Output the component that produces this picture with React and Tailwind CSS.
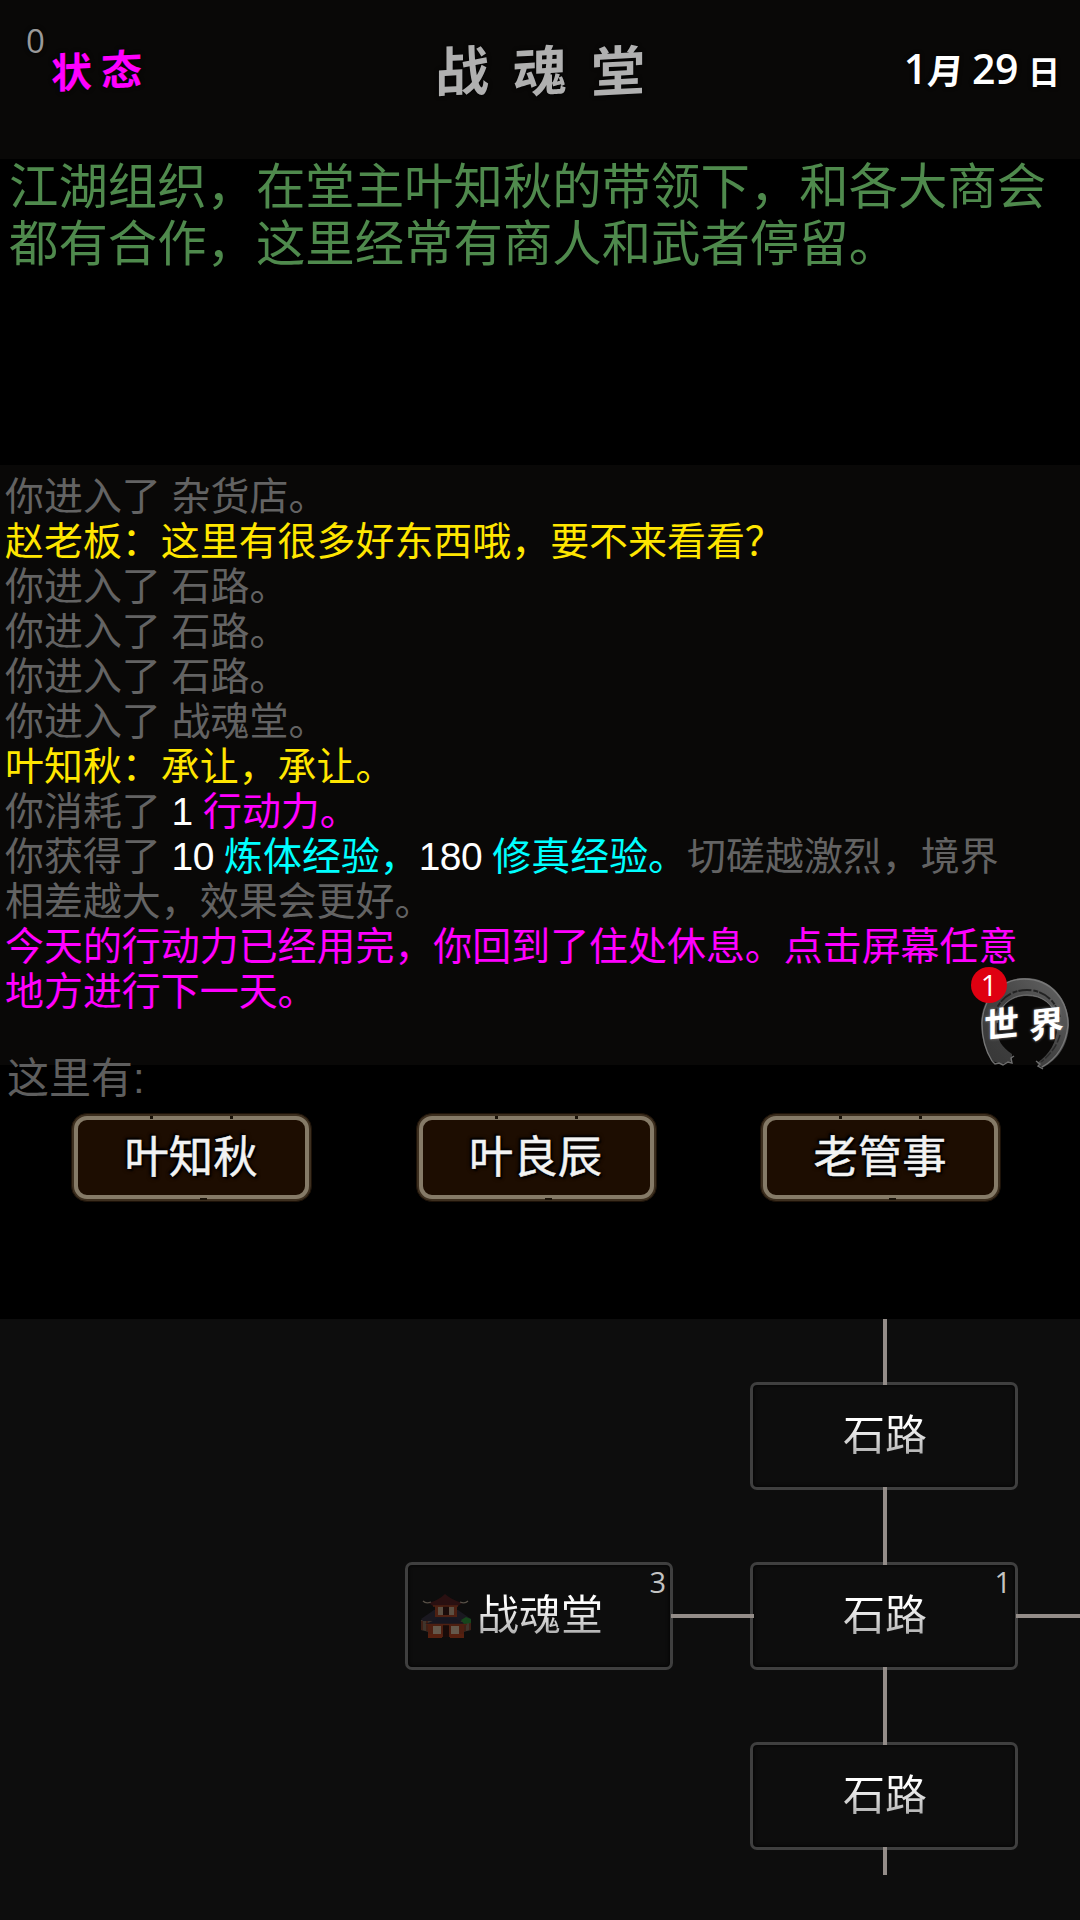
const logLines = [
  [{ text: '你进入了 杂货店。', tone: 'muted' }],
  [{ text: '赵老板：这里有很多好东西哦，要不来看看？', tone: 'talk' }],
  [{ text: '你进入了 石路。', tone: 'muted' }],
  [{ text: '你进入了 石路。', tone: 'muted' }],
  [{ text: '你进入了 石路。', tone: 'muted' }],
  [{ text: '你进入了 战魂堂。', tone: 'muted' }],
  [{ text: '叶知秋：承让，承让。', tone: 'talk' }],
  [
    { text: '你消耗了 ', tone: 'muted' },
    { text: '1 ', tone: 'number' },
    { text: '行动力。', tone: 'action' },
  ],
  [
    { text: '你获得了 ', tone: 'muted' },
    { text: '10 ', tone: 'number' },
    { text: '炼体经验，', tone: 'exp' },
    { text: '180 ', tone: 'number' },
    { text: '修真经验。', tone: 'exp' },
    { text: '切磋越激烈，境界', tone: 'muted' },
  ],
  [{ text: '相差越大，效果会更好。', tone: 'muted' }],
  [{ text: '今天的行动力已经用完，你回到了住处休息。点击屏幕任意', tone: 'action' }],
  [{ text: '地方进行下一天。', tone: 'action' }],
];

const tones = {
  muted: 'text-[#636363]',
  talk: 'text-[#ffe600]',
  number: 'text-white tracking-[-0.55px]',
  action: 'text-[#ff00ff]',
  exp: 'text-[#00ffff]',
};

const people = ['叶知秋', '叶良辰', '老管事'];

const rooms = [
  { id: 'north', name: '石路', place: 'left-[750px] top-[63px]' },
  { id: 'hall', name: '战魂堂', count: 3, icon: true, place: 'left-[405px] top-[243px]' },
  { id: 'center', name: '石路', count: 1, place: 'left-[750px] top-[243px]' },
  { id: 'south', name: '石路', place: 'left-[750px] top-[423px]' },
];

const paths = [
  'left-[883px] top-0 w-1 h-[66px]',
  'left-[883px] top-[168px] w-1 h-[78px]',
  'left-[883px] top-[348px] w-1 h-[78px]',
  'left-[883px] top-[528px] w-1 h-[28px]',
  'left-[671px] top-[295px] w-[83px] h-1',
  'left-[1016px] top-[295px] w-[64px] h-1',
];

function Header() {
  return (
    <header className="h-[159px] shrink-0 flex items-start justify-between bg-[#090807] font-bold whitespace-nowrap [text-shadow:0_0_4px_#000]">
      <div className="w-[330px] flex items-start pl-[26px]">
        <span className="mt-[17px] w-[25px] text-[33px] leading-[48px] font-medium text-[#999] font-['Open_Sans','Noto_Sans',sans-serif]">0</span>
        <span className="mt-[46px] text-[41px] leading-[52px] tracking-[9px] text-[#ff00ff] -skew-y-3">状态</span>
      </div>
      <h1 className="mt-[37px] text-[54px] leading-[70px] text-[#b0b0b0] flex gap-[24px]">
        <span className="-skew-y-3">战</span>
        <span className="-skew-y-3">魂</span>
        <span className="-skew-y-3">堂</span>
      </h1>
      <div className="mt-[41px] pr-[20px] w-[330px] flex justify-end items-baseline text-[35px] leading-[54px] text-white font-['Open_Sans','Noto_Sans_CJK_SC',sans-serif]">
        <span className="text-[41px] mr-px font-semibold">1</span>
        <span className="mr-[9px] -skew-x-6">月</span>
        <span className="text-[41px] mr-[10px] font-semibold tracking-[-0.5px]">29</span>
        <span className="text-[32px]">日</span>
      </div>
    </header>
  );
}

function WorldButton() {
  return (
    <button className="absolute left-[970px] top-[498px] w-[104px] h-[108px] z-10">
      <svg viewBox="0 0 104 108" className="absolute inset-0 w-full h-full" fill="none">
        <defs>
          <linearGradient id="ink" x1="0" y1="1" x2="1" y2="0">
            <stop offset="0" stopColor="#353535" />
            <stop offset="0.5" stopColor="#444" />
            <stop offset="1" stopColor="#666" />
          </linearGradient>
        </defs>
        <path d="M22 98 C15 86 11 74 11 60 C12 34 30 15 55 15 C83 15 99 38 99 62 C98 82 88 97 72 105 L67 100 C80 91 87 79 87 64 C87 46 76 33 57 33 C38 33 27 47 27 64 C27 78 32 84 42 91 L42 98 L32 101 Z" fill="url(#ink)" />
        <path d="M22 98 C15 87 12 76 12 60 C13 35 31 16 54 16 C82 16 98 38 98 62 C96 82 88 95 72 104" stroke="#777" strokeWidth="1.3" />
        <path d="M23 58 C26 39 38 27 57 27 C74 27 86 38 90 54" stroke="#222" strokeWidth="2" strokeDasharray="13 2 5 1" />
        <path d="M27 60 C28 44 40 32 57 32 C72 32 83 41 87 54" stroke="#707070" strokeWidth="1" />
        <path d="M90 72 C87 83 80 92 71 99" stroke="#2b2b2b" strokeWidth="1.5" strokeDasharray="8 2" />
        <path d="M22 98 L25 101 L29 100 L33 102 L38 99 L42 100 L41 95 L44 93 M66 98 L70 101 L68 103 L73 106" stroke="#6e6e6e" strokeWidth="1.4" />
      </svg>
      <span className="absolute left-[14px] top-[44px] text-[35px] leading-[36px] font-bold text-white whitespace-nowrap flex gap-[10px] [text-shadow:0_0_3px_#888]">
        <span className="-skew-y-6">世</span>
        <span className="-skew-y-6">界</span>
      </span>
      <span className="absolute left-[1px] top-[4px] w-[36px] h-[36px] rounded-full bg-[#df0011] text-white text-[29px] leading-[36px] text-center font-['Open_Sans','Noto_Sans',sans-serif]">
        1
      </span>
    </button>
  );
}

function EventLog() {
  return (
    <section className="relative h-[600px] shrink-0 bg-[#090807] pt-[9px] pl-[5px] text-[38.95px] leading-[45px]">
      {logLines.map((line, i) => (
        <p key={i} className="whitespace-pre">
          {line.map((part, j) => (
            <span key={j} className={tones[part.tone]}>{part.text}</span>
          ))}
        </p>
      ))}
      <WorldButton />
    </section>
  );
}

function PersonButton({ name }) {
  return (
    <button className="relative w-[241px] h-[89px] rounded-[16px] border border-[#1d1208] bg-[#3d2f1f] p-[2px]">
      <span className="flex items-center justify-center w-full h-full pt-[2px] pr-px rounded-[13px] border-4 border-[#857a67] bg-[#1d0d01] text-[44.4px] leading-none text-[#f2f2f2] [-webkit-text-stroke:0.5px_#f2f2f2] [text-shadow:0_0_3px_#000,0_0_5px_#000,2px_2px_2px_#000,-2px_-2px_2px_#000]">
        {name}
      </span>
      {/* Notches in the worn frame */}
      <i className="absolute left-[78px] top-[2px] w-[3px] h-[3px] bg-[#1a1208]" />
      <i className="absolute left-[158px] top-[2px] w-[3px] h-[3px] bg-[#1a1208]" />
      <i className="absolute left-[128px] bottom-[1px] w-[7px] h-[2px] bg-[#1a1208]" />
    </button>
  );
}

function HallIcon() {
  return (
    <svg viewBox="0 0 50 46" className="w-[50px] h-[46px] shrink-0">
      <path d="M0 27 H50 V37 L42 39 H8 L0 37 Z" fill="#40352c" />
      <path d="M1 28 V37 M6 28 V38 M44 28 V38 M49 28 V37" stroke="#3f1a0f" strokeWidth="1.5" />
      <path d="M0 26 L13 17 H37 L50 26 L48 28 H2 Z" fill="#1a1820" />
      <path d="M14 11 H36 V24 H14 Z" fill="#4e2012" />
      <path d="M17 14 H33 V22 H17 Z" fill="#5c4f42" />
      <path d="M22 13 H28 V22 H22 Z" fill="#1b0c0a" />
      <path d="M8 10 Q18 7 24 1 Q31 7 41 10 L37 13 H12 Z" fill="#2a1011" />
      <path d="M12 13 H37" stroke="#4e2012" strokeWidth="1.5" />
      <path d="M2 8 Q5 11 10 9 M47 8 Q44 11 39 9" stroke="#575047" strokeWidth="1.3" fill="none" />
      <path d="M7 31 H43 V44 H7 Z" fill="#4e1f11" />
      <path d="M12 33 H20 V41 H12 Z M30 33 H38 V41 H30 Z" fill="#64584b" />
      <path d="M22 32 H28 V44 H22 Z" fill="#180b09" />
      <path d="M4 31 Q13 28 17 25 H34 Q38 28 46 31 Z" fill="#171620" />
      <path d="M5 31.5 H46" stroke="#4e2012" strokeWidth="1.5" />
      <path d="M7 41 H21 V45 H7 Z M29 41 H43 V45 H29 Z" fill="#56200f" />
      <path d="M40 27 L45 24 L50 26 V30 L43 31 Z" fill="#16461c" />
    </svg>
  );
}

function Room({ room }) {
  return (
    <div className={`absolute w-[268px] h-[108px] rounded-[7px] border-[3px] border-[#3f3f3f] bg-[#0d0d0d] shadow-[inset_0_0_4px_#000] flex items-center ${room.icon ? 'pl-[13px] gap-[6px]' : 'justify-center pl-[2px]'} ${room.place}`}>
      {room.icon && <HallIcon />}
      <span className="text-[42px] leading-[52px] text-transparent bg-clip-text bg-linear-to-b from-white from-25% to-[#aaa] to-90%">{room.name}</span>
      {room.count && (
        <span className="absolute right-[4px] top-0 text-[29px] leading-[34px] font-medium text-[#c4c4c4] font-['Open_Sans','Noto_Sans',sans-serif]">{room.count}</span>
      )}
    </div>
  );
}

export default function App() {
  return (
    <main className="w-[1080px] h-[1920px] overflow-hidden flex flex-col bg-black font-['Liberation_Sans','Noto_Sans_CJK_SC',sans-serif]">
      <Header />

      <section className="h-[306px] shrink-0 pl-[9px] text-[49.4px] leading-[56.5px] text-[#4f8a4d]">
        <p className="whitespace-nowrap">江湖组织，在堂主叶知秋的带领下，和各大商会</p>
        <p className="whitespace-nowrap">都有合作，这里经常有商人和武者停留。</p>
      </section>

      <EventLog />

      {/* Who is here */}
      <section className="relative h-[254px] shrink-0">
        <h2 className="h-[48px] -mt-[12px] pl-[7px] text-[42px] leading-[52px] text-[#5e5e5e]">这里有:</h2>
        <div className="mt-[12px] pl-[71px] flex gap-[103.5px]">
          {people.map((name) => (
            <PersonButton key={name} name={name} />
          ))}
        </div>
      </section>

      {/* Map */}
      <section className="relative flex-1 bg-[#0d0d0d] overflow-hidden">
        {rooms.map((room) => (
          <Room key={room.id} room={room} />
        ))}
        {paths.map((place) => (
          <i key={place} className={`absolute bg-[#938c88] ${place}`} />
        ))}
      </section>
    </main>
  );
}
